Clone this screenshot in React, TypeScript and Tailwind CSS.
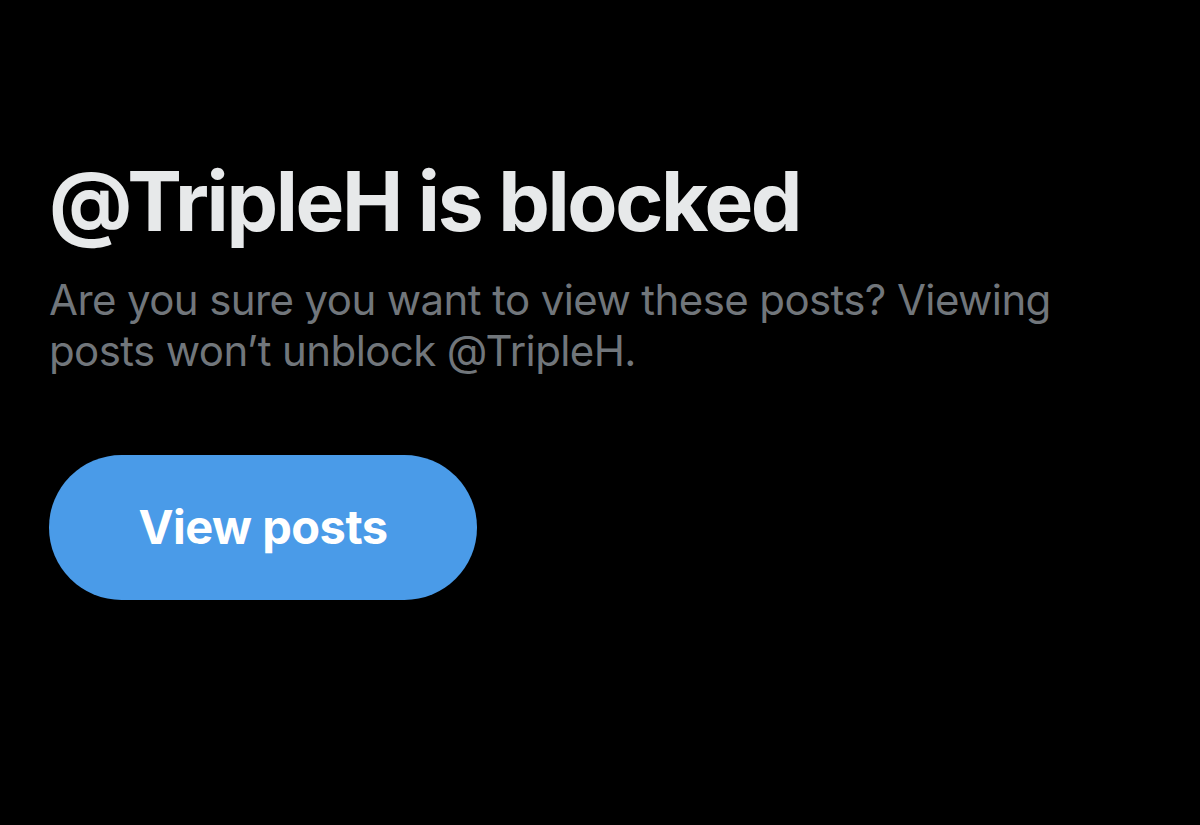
export default function App() {
  return (
    <div className="w-[1200px] h-[825px] bg-black overflow-hidden" style={{ fontFamily: "Inter, 'Noto Sans', sans-serif" }}>
      <div className="pl-[49px] pt-[152px] flex flex-col items-start">
        <h1 className="text-[82px] leading-[100px] font-bold text-[#e7e9ea] tracking-[-2.4px]">@TripleH is blocked</h1>
        <p className="mt-[22px] w-[1060px] text-[42px] leading-[51px] text-[#71767b] tracking-[-0.6px]">
          Are you sure you want to view these posts? Viewing posts won’t unblock @TripleH.
        </p>
        <button className="mt-[79px] w-[428px] h-[145px] rounded-full bg-[#4a9be8] text-white text-[47px] font-bold tracking-[-0.5px]">
          View posts
        </button>
      </div>
    </div>
  );
}
